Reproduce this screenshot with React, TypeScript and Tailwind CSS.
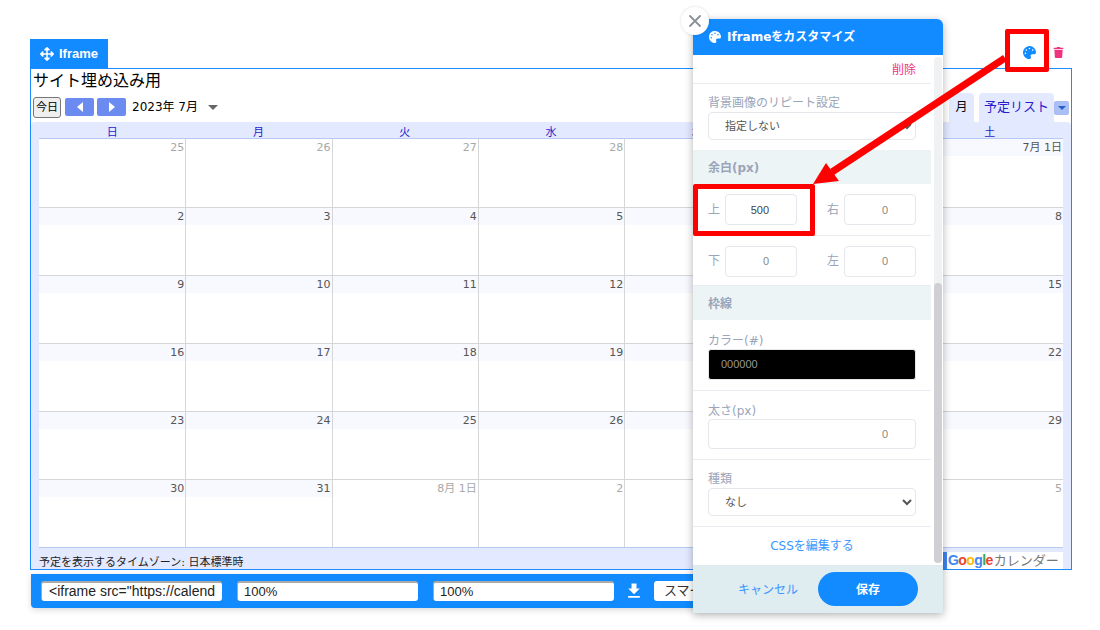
import { FaArrowsAlt, FaPalette, FaTrash } from "react-icons/fa";
import { MdFileDownload } from "react-icons/md";

const JP = "font-['DejaVu_Sans','Noto_Sans_CJK_JP',sans-serif]";
const weekDays = ["日", "月", "火", "水", "木", "金", "土"];
type Cell = { label: string; muted?: boolean };
const dates: Cell[][] = [
  [{ label: "25", muted: true }, { label: "26", muted: true }, { label: "27", muted: true }, { label: "28", muted: true }, { label: "29", muted: true }, { label: "30", muted: true }, { label: "7月 1日" }],
  ["2", "3", "4", "5", "6", "7", "8"].map((label) => ({ label })),
  ["9", "10", "11", "12", "13", "14", "15"].map((label) => ({ label })),
  ["16", "17", "18", "19", "20", "21", "22"].map((label) => ({ label })),
  ["23", "24", "25", "26", "27", "28", "29"].map((label) => ({ label })),
  [{ label: "30" }, { label: "31" }, { label: "8月 1日", muted: true }, { label: "2", muted: true }, { label: "3", muted: true }, { label: "4", muted: true }, { label: "5", muted: true }],
];

function Calendar() {
  return (
    <div className="h-[502px] w-[1042px] border border-[#1a8cff] bg-white flex flex-col">
      <div className={`h-[23px] shrink-0 pl-[2px] text-[16px] leading-[23px] text-black ${JP}`}>サイト埋め込み用</div>
      <div className="h-[30px] shrink-0 flex justify-between pl-[2px] pr-[2px]">
        <div className="flex items-center h-[26px] pt-[4px]">
          <div className={`w-[28px] h-[21px] rounded-[3px] border border-[#777] bg-[#efefef] text-[11px] leading-[19px] text-center text-black ${JP}`}>今日</div>
          <div className="w-[29px] h-[18px] ml-[4px] rounded-[2px] bg-[#6b8bf0] flex items-center justify-center">
            <div className="w-0 h-0 border-y-[5px] border-y-transparent border-r-[6px] border-r-white" />
          </div>
          <div className="w-[29px] h-[18px] ml-[3px] rounded-[2px] bg-[#6b8bf0] flex items-center justify-center">
            <div className="w-0 h-0 border-y-[5px] border-y-transparent border-l-[6px] border-l-white" />
          </div>
          <div className={`ml-[6px] text-[12px] text-black ${JP}`}>2023年 7月</div>
          <div className="ml-[10px] mt-[1px] w-0 h-0 border-x-[5px] border-x-transparent border-t-[5px] border-t-[#666]" />
        </div>
        <div className={`flex items-start text-[13px] leading-[28px] ${JP}`}>
          <div className="mt-[1px] w-[25px] h-[29px] rounded-t-[4px] bg-[#e3e9ff] text-center text-[12px] text-black">月</div>
          <div className="mt-[1px] ml-[5px] w-[75px] h-[29px] rounded-t-[4px] bg-[#e3e9ff] text-center text-[#2a1ad0]">予定リスト</div>
          <div className="mt-[9px] w-[15px] h-[14px] rounded-[2px] border border-[#a9bdf0] bg-[#a9c0f5] flex items-center justify-center">
            <div className="w-0 h-0 border-x-[4px] border-x-transparent border-t-[4px] border-t-[#2c5bd0]" />
          </div>
        </div>
      </div>
      <div className="flex-1 min-h-0 bg-[#e3e9ff] rounded-t-[4px] flex flex-col">
        <div className={`relative z-10 h-[16px] shrink-0 mx-[8px] grid grid-cols-7 text-[11px] leading-[21px] text-center text-[#2a1ad0] ${JP}`}>
          {weekDays.map((d) => (
            <div key={d}>{d}</div>
          ))}
        </div>
        <div className="mx-[8px] h-[410px] shrink-0 grid grid-cols-7 grid-rows-6 bg-white border-y border-[#b8c8f5]">
          {dates.flat().map((c, i) => (
            <div
              key={i}
              className={`border-[#d6d6d6] ${i % 7 === 0 ? "" : "border-l"} ${i < 7 ? "" : "border-t"}`}
            >
              <div
                className={`h-[17px] pr-[1px] text-right text-[11px] leading-[17px] ${JP} ${
                  c.muted ? "text-[#a8a8a8]" : "bg-[#f8f9ff] text-[#555]"
                }`}
              >
                {c.label}
              </div>
            </div>
          ))}
        </div>
        <div className="h-[21px] shrink-0 overflow-hidden flex justify-between pl-[8px] pr-[8px]">
          <div className={`pt-[7px] text-[11px] leading-[16px] text-[#222] ${JP}`}>予定を表示するタイムゾーン: 日本標準時</div>
          <div className="mt-[4px] h-[17px] w-[120px] flex items-center bg-white border-l-[4px] border-[#3f86f2]">
            <span className="ml-[1px] font-['Liberation_Sans',sans-serif] font-bold text-[14px] leading-[17px] tracking-[-0.6px]">
              <span className="text-[#4285f4]">G</span>
              <span className="text-[#ea4335]">o</span>
              <span className="text-[#fbbc05]">o</span>
              <span className="text-[#4285f4]">g</span>
              <span className="text-[#34a853]">l</span>
              <span className="text-[#ea4335]">e</span>
            </span>
            <span className={`ml-[1px] text-[13px] text-[#777] ${JP}`}>カレンダー</span>
          </div>
        </div>
      </div>
    </div>
  );
}

function Toolbar() {
  const field =
    "h-[20px] rounded-[3px] bg-white border-t-2 border-l border-[#aaa] pb-[2px] leading-[16px] text-[#222] font-['Liberation_Sans',sans-serif] outline-none";
  return (
    <div className="ml-[1px] mt-[4px] h-[34px] w-[800px] rounded-b-[4px] bg-[#118bff] shadow-[0_2px_6px_rgba(0,0,0,0.15)] flex items-center pl-[10px]">
      <input readOnly value={'<iframe src="https://calendar.google.com'} className={`${field} w-[181px] pl-[7px] pr-[7px] text-[14px]`} />
      <input readOnly value="100%" className={`${field} w-[181px] ml-[15px] pl-[6px] text-[13px]`} />
      <input readOnly value="100%" className={`${field} w-[181px] ml-[15px] pl-[6px] text-[13px]`} />
      <MdFileDownload className="ml-[10px] text-white" size={20} />
      <div className={`ml-[10px] h-[20px] w-[110px] rounded-[3px] bg-white pl-[10px] text-[13px] leading-[20px] text-[#333] ${JP}`}>スマー</div>
    </div>
  );
}

function Label({ children }: { children: string }) {
  return <div className={`text-[12px] leading-[16px] text-[#9aa5b8] ${JP}`}>{children}</div>;
}

function Section({ children, h }: { children: string; h: string }) {
  return <div className={`${h} bg-[#edf4f6] pl-[15px] pt-[2px] flex items-center text-[12px] font-bold text-[#9aa5b8] ${JP}`}>{children}</div>;
}

function Num({ value, dark, wide }: { value: string; dark?: boolean; wide?: boolean }) {
  return (
    <input
      readOnly
      value={value}
      className={`${wide ? "w-[208px] h-[30px]" : "w-[72px] h-[31px]"} pr-[27px] rounded-[4px] border border-[#e4e7ec] bg-white text-right text-[11px] font-['Liberation_Sans',sans-serif] outline-none ${
        dark ? "text-[#444]" : "text-[#888]"
      }`}
    />
  );
}

function Pair({ a, av, b, bv, dark, h, pt }: { a: string; av: string; b: string; bv: string; dark?: boolean; h: string; pt: string }) {
  return (
    <div className={`${h} ${pt} flex items-center pl-[15px] border-b border-[#e9edf1] text-[12px] text-[#9aa5b8] ${JP}`}>
      <span className="w-[17px]">{a}</span>
      <Num value={av} dark={dark} />
      <span className="w-[17px] ml-[30px]">{b}</span>
      <Num value={bv} />
    </div>
  );
}

function Panel() {
  return (
    <div className="absolute z-20 left-[693px] top-[19px] w-[250px] h-[594px] flex flex-col rounded-t-[6px] bg-white shadow-[0_2px_8px_rgba(0,0,0,0.3)]">
      <div className={`h-[36px] shrink-0 rounded-t-[6px] bg-[#118bff] flex items-center pl-[16px] text-[12px] font-bold text-white ${JP}`}>
        <FaPalette size={12} />
        <span className="ml-[6px]">Iframeをカスタマイズ</span>
      </div>
      <div className="flex-1 flex min-h-0">
        <div className="w-[238px] flex flex-col">
          <div className={`h-[29px] border-b border-[#e9edf1] pr-[15px] pt-[7px] text-right text-[12px] leading-[16px] text-[#f0337f] ${JP}`}>削除</div>
          <div className="h-[66px] px-[15px] pt-[11px]">
            <Label>背景画像のリピート設定</Label>
            <select className={`mt-[1px] w-[208px] h-[28px] pl-[12px] rounded-[4px] border border-[#e4e7ec] bg-white text-[11px] text-[#555] ${JP}`}>
              <option>指定しない</option>
            </select>
          </div>
          <Section h="h-[34px]">余白(px)</Section>
          <Pair h="h-[52px]" pt="" a="上" av="500" b="右" bv="0" dark />
          <Pair h="h-[50px]" pt="pt-[1px]" a="下" av="0" b="左" bv="0" />
          <Section h="h-[34px]">枠線</Section>
          <div className="h-[71px] px-[15px] pt-[13px] border-b border-[#e9edf1]">
            <Label>カラー(#)</Label>
            <div className="w-[208px] h-[31px] rounded-[3px] border border-[#e4e7ec] bg-black pl-[12px] text-[11px] leading-[29px] text-[#999] font-['Liberation_Sans',sans-serif]">000000</div>
          </div>
          <div className="h-[69px] px-[15px] pt-[12px] border-b border-[#e9edf1]">
            <Label>太さ(px)</Label>
            <Num value="0" wide />
          </div>
          <div className="h-[67px] px-[15px] pt-[11px] border-b border-[#e9edf1]">
            <Label>種類</Label>
            <select className={`mt-[1px] w-[208px] h-[28px] pl-[12px] rounded-[4px] border border-[#e4e7ec] bg-white text-[11px] text-[#555] ${JP}`}>
              <option>なし</option>
            </select>
          </div>
          <div className={`flex-1 flex items-center justify-center text-[12px] text-[#3b96ff] ${JP}`}>CSSを編集する</div>
        </div>
        <div className="ml-[3px] mt-[2px] mb-[2px] w-[8px] rounded-[4px] bg-[#f0f1f3] flex flex-col justify-end">
          <div className="h-[280px] rounded-[4px] bg-[#cfcfd4]" />
        </div>
      </div>
      <div className={`h-[48px] shrink-0 bg-[#dfecf0] flex items-center pl-[45px] text-[12px] ${JP}`}>
        <span className="pt-[2px] text-[#3b96ff]">キャンセル</span>
        <div className="ml-[20px] w-[100px] h-[34px] pt-[2px] rounded-full bg-[#118bff] flex items-center justify-center font-bold text-white">保存</div>
      </div>
      <div className="absolute left-[-12px] top-[-12px] w-[28px] h-[28px] rounded-full bg-white shadow-[0_0_3px_rgba(0,0,0,0.15)] flex items-center justify-center">
        <svg width="14" height="14" viewBox="0 0 14 14" stroke="#8a8f98" strokeWidth="1.8" strokeLinecap="round">
          <path d="M2 2 L12 12 M12 2 L2 12" />
        </svg>
      </div>
    </div>
  );
}

export default function App() {
  return (
    <div className="relative w-[1100px] h-[630px] overflow-hidden bg-white pt-[39px] pl-[30px]">
      <div className="flex items-start justify-between w-[1042px] h-[29px]">
        <div className="w-[78px] h-[29px] bg-[#118bff] flex items-center pl-[10px] text-[13px] font-bold text-white font-['Liberation_Sans',sans-serif]">
          <FaArrowsAlt size={14} />
          <span className="ml-[5px]">Iframe</span>
        </div>
        <div className="flex items-center h-[26px] pr-[8px] text-[12px]">
          <FaPalette className="text-[#118bff]" size={13} />
          <FaTrash className="ml-[17px] text-[#f0337f]" size={11} />
        </div>
      </div>
      <Calendar />
      <Toolbar />
      <Panel />
      <div className="absolute z-30 left-[1005px] top-[29px] w-[44px] h-[43px] border-[5px] border-[#ff0000] rounded-[2px]" />
      <div className="absolute z-30 left-[693px] top-[184px] w-[122px] h-[52px] border-[5px] border-[#ff0000] rounded-[2px]" />
      <svg className="absolute z-30 left-0 top-0 pointer-events-none" width="1100" height="630">
        <line x1="1005" y1="58" x2="832" y2="172" stroke="#ff0000" strokeWidth="7" />
        <polygon points="813,184 826,163 839,181" fill="#ff0000" />
      </svg>
    </div>
  );
}
